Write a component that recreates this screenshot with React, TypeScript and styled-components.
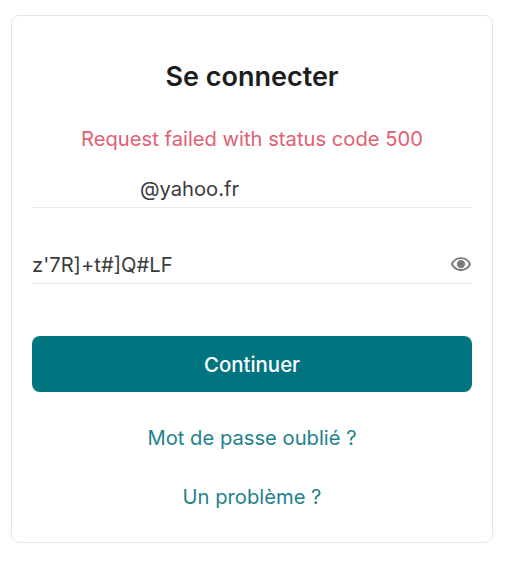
import * as React from "react";
import styled, { createGlobalStyle } from "styled-components";

const GlobalStyle = createGlobalStyle`
	html, body {
		margin: 0;
		background: #fff;
		font-family: Inter, "Liberation Sans", sans-serif;
	}
	* { box-sizing: border-box; }
`;

const Page = styled.div`
	width: 510px;
	height: 561px;
	padding: 15px 17px 18px 11px;
`;

const Card = styled.form`
	height: 528px;
	border: 1px solid #e6e6e6;
	border-radius: 8px;
	background: #fff;
	padding: 43px 20px 0 20px;
	display: flex;
	flex-direction: column;
`;

const Title = styled.h1`
	margin: 0;
	font-size: 27px;
	line-height: 36px;
	font-weight: 600;
	color: #1b1d1e;
	text-align: center;
`;

const ErrorText = styled.p`
	margin: 30px 0 0;
	font-size: 20.2px;
	line-height: 28px;
	color: #e06173;
	text-align: center;
`;

const Field = styled.div<{ $top: number; $pad: number }>`
	margin-top: ${(p) => p.$top}px;
	height: 37px;
	padding-bottom: ${(p) => p.$pad}px;
	display: flex;
	align-items: center;
	justify-content: space-between;
	border-bottom: 1px solid #ebebeb;
	font-size: 20.2px;
	color: #3a3c3d;
`;

const Value = styled.span<{ $indent?: number }>`
	padding-left: ${(p) => p.$indent || 0}px;
`;

const EyeIcon = styled.svg`
	width: 22px;
	height: 22px;
	fill: #757575;
`;

const SubmitButton = styled.button`
	margin-top: 52px;
	height: 56px;
	border: none;
	border-radius: 8px;
	background: #00757f;
	color: #fff;
	font-family: inherit;
	font-size: 20.4px;
	font-weight: 500;
`;

const TextLink = styled.a<{ $top: number }>`
	margin-top: ${(p) => p.$top}px;
	font-size: 20.2px;
	line-height: 28px;
	color: #1f828b;
	text-align: center;
	text-decoration: none;
`;

export default function App() {
	return (
		<Page>
			<GlobalStyle />
			<Card>
				<Title>Se connecter</Title>
				<ErrorText>Request failed with status code 500</ErrorText>
				<Field $top={18} $pad={2}>
					<Value $indent={108}>@yahoo.fr</Value>
				</Field>
				<Field $top={39} $pad={2}>
					<Value>z'7R]+t#]Q#LF</Value>
					<EyeIcon viewBox="0 0 24 24">
						<path d="M12 6.5a9.77 9.77 0 0 1 8.82 5.5A9.77 9.77 0 0 1 12 17.5 9.77 9.77 0 0 1 3.18 12 9.77 9.77 0 0 1 12 6.5m0-2C7 4.5 2.73 7.61 1 12c1.73 4.39 6 7.5 11 7.5s9.27-3.11 11-7.5c-1.73-4.39-6-7.5-11-7.5zm0 5a2.5 2.5 0 0 1 0 5 2.5 2.5 0 0 1 0-5m0-2c-2.48 0-4.5 2.02-4.5 4.5s2.02 4.5 4.5 4.5 4.5-2.02 4.5-4.5-2.02-4.5-4.5-4.5z" />
						<circle cx="12" cy="12" r="2.5" />
					</EyeIcon>
				</Field>
				<SubmitButton type="button">Continuer</SubmitButton>
				<TextLink href="#" $top={32}>Mot de passe oublié ?</TextLink>
				<TextLink href="#" $top={31}>Un problème ?</TextLink>
			</Card>
		</Page>
	);
}
